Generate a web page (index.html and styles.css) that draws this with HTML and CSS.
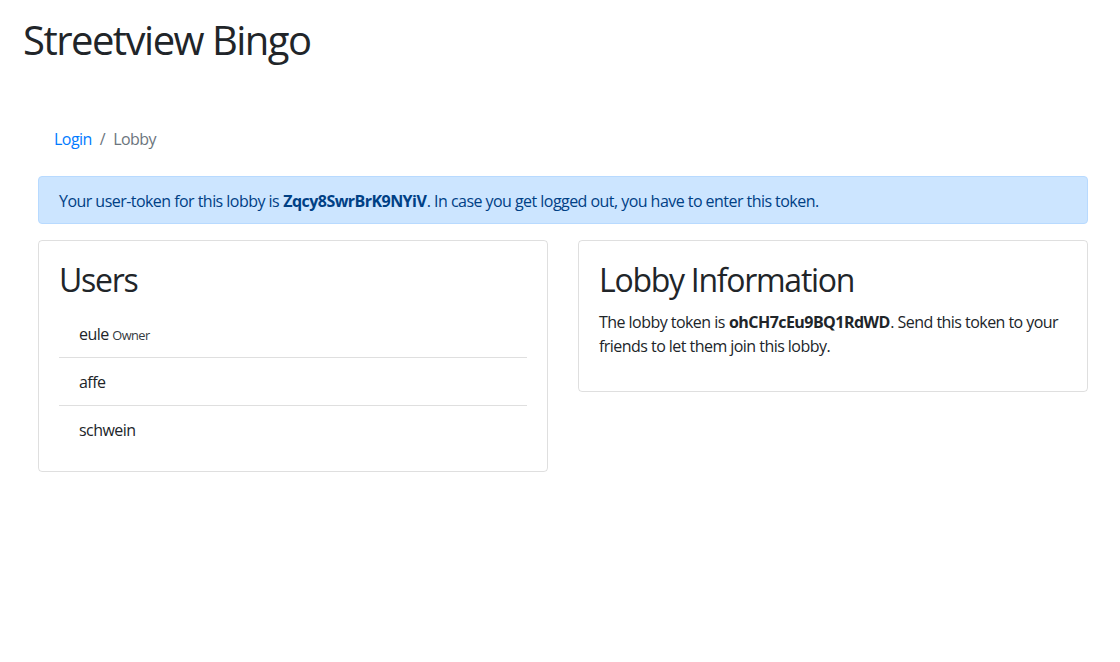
FILE: index.html
```html
<!DOCTYPE html>
<html lang="en">
<head>
<meta charset="utf-8">
<title>Streetview Bingo</title>
<link rel="stylesheet" href="styles.css">
</head>
<body>
<header class="site-header">
  <h1 class="site-title">Streetview Bingo</h1>
</header>
<main class="page">
  <nav class="breadcrumb">
    <a class="crumb-link" href="#">Login</a>
    <span class="crumb-sep">/</span>
    <span class="crumb-active">Lobby</span>
  </nav>
  <div class="alert">
    Your user-token for this lobby is <strong class="token">Zqcy8SwrBrK9NYiV</strong>. In case you get logged out, you have to enter this token.
  </div>
  <div class="cards">
    <section class="card">
      <h2 class="card-title">Users</h2>
      <ul class="list">
        <li class="list-item">eule <small class="owner">Owner</small></li>
        <li class="list-item">affe</li>
        <li class="list-item">schwein</li>
      </ul>
    </section>
    <section class="card">
      <h2 class="card-title">Lobby Information</h2>
      <p class="card-text"><span class="line">The lobby token is <strong class="token">ohCH7cEu9BQ1RdWD</strong>. Send this token to your</span> <span class="line">friends to let them join this lobby.</span></p>
    </section>
  </div>
</main>
</body>
</html>
```
FILE: styles.css
```css
* { box-sizing: border-box; }
html, body { margin: 0; padding: 0; background: #fff; }
body {
  font-family: "Segoe UI", "Open Sans", "Noto Sans", sans-serif;
  font-size: 16px;
  line-height: 1.5;
  color: #212529;
  letter-spacing: -0.034em;
}
.site-header { padding: 16px 23px 0; }
.site-title {
  margin: 0;
  font-size: 40px;
  font-weight: 400;
  line-height: 48px;
  letter-spacing: -0.038em;
}
.page { padding: 51px 32px 0 38px; }
.breadcrumb {
  display: flex;
  align-items: center;
  padding: 12px 16px;
  margin-bottom: 13px;
}
.crumb-link { color: #007bff; text-decoration: none; }
.crumb-sep { color: #6c757d; padding: 0 8px; }
.crumb-active { color: #6c757d; }
.alert {
  background: #cce5ff;
  border: 1px solid #b8daff;
  color: #004085;
  border-radius: 4px;
  padding: 12px 20px 10px;
  margin-bottom: 16px;
}
.token { font-weight: 700; padding: 0 0.6px; }
.cards {
  display: grid;
  grid-template-columns: 1fr 1fr;
  gap: 30px;
  align-items: start;
}
.card {
  border: 1px solid rgba(0,0,0,.125);
  border-radius: 4px;
  padding: 20px;
}
.card-title {
  margin: 0 0 11px;
  font-size: 32px;
  font-weight: 400;
  line-height: 1.2;
  letter-spacing: -0.04em;
}
.card-text { margin: 0 0 13px; }
.line { white-space: nowrap; }
.list { list-style: none; margin: 0; padding: 0; }
.list-item {
  padding: 11.5px 20px;
  border-bottom: 1px solid rgba(0,0,0,.125);
}
.list-item:last-child { border-bottom: 0; padding-bottom: 9.5px; }
.owner { font-size: 12.8px; color: #343a40; }
```
